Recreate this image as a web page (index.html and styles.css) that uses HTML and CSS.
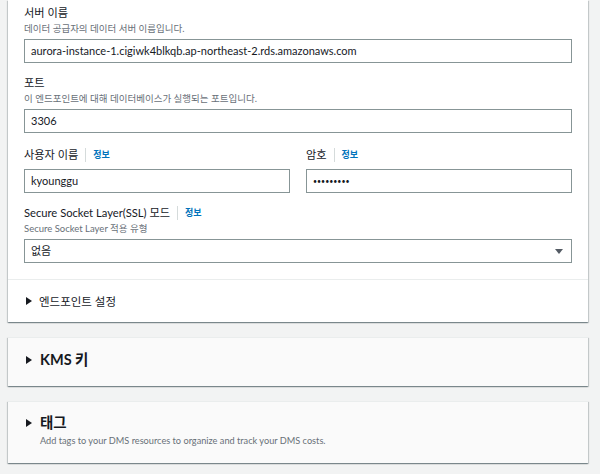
FILE: index.html
```html
<!DOCTYPE html>
<html lang="ko">
<head>
<meta charset="utf-8">
<link rel="stylesheet" href="styles.css">
</head>
<body>
<div class="page">
  <section class="card main">
    <div class="fields">
      <div class="field">
        <div class="label">서버 이름</div>
        <div class="desc">데이터 공급자의 데이터 서버 이름입니다.</div>
        <div class="input">aurora-instance-1.cigiwk4blkqb.ap-northeast-2.rds.amazonaws.com</div>
      </div>
      <div class="field">
        <div class="label">포트</div>
        <div class="desc">이 엔드포인트에 대해 데이터베이스가 실행되는 포트입니다.</div>
        <div class="input">3306</div>
      </div>
      <div class="row">
        <div class="field">
          <div class="label">사용자 이름<span class="sep"></span><a class="info">정보</a></div>
          <div class="input">kyounggu</div>
        </div>
        <div class="field">
          <div class="label">암호<span class="sep"></span><a class="info">정보</a></div>
          <div class="input pw">•••••••••</div>
        </div>
      </div>
      <div class="field ssl">
        <div class="label">Secure Socket Layer(SSL) 모드<span class="sep"></span><a class="info">정보</a></div>
        <div class="desc">Secure Socket Layer 적용 유형</div>
        <div class="input select">없음<span class="caret"></span></div>
      </div>
    </div>
    <div class="expander"><span class="tri"></span>엔드포인트 설정</div>
  </section>
  <section class="card sub">
    <h2 class="head"><span class="tri"></span>KMS 키</h2>
  </section>
  <section class="card sub tags">
    <h2 class="head"><span class="tri"></span>태그</h2>
    <div class="desc hd">Add tags to your DMS resources to organize and track your DMS costs.</div>
  </section>
</div>
</body>
</html>
```

FILE: styles.css
```css
* { box-sizing: border-box; }
html, body { margin: 0; padding: 0; }
body {
  background: #f2f3f3;
  font-family: Lato, "Noto Sans CJK KR", sans-serif;
  color: #16191f;
  width: 600px;
  height: 474px;
  overflow: hidden;
}
.page {
  padding: 0 12px 0 8px;
  display: flex;
  flex-direction: column;
  gap: 15px;
}
.card {
  background: #fff;
  border-top: 1px solid #eaeded;
  box-shadow: 0 1px 1px 0 rgba(0,28,36,.3), 1px 1px 1px 0 rgba(0,28,36,.15), -1px 1px 1px 0 rgba(0,28,36,.15);
}
.card.main { border-top: 0; }
.fields {
  padding: 4px 16px 16px 16px;
  display: flex;
  flex-direction: column;
  gap: 11px;
}
.field { display: flex; flex-direction: column; }
.row {
  display: grid;
  grid-template-columns: 1fr 1fr;
  gap: 16px;
  margin-top: 2px;
}
.label {
  font-size: 11.2px;
  line-height: 18px;
  display: flex;
  align-items: center;
  font-family: Lato, "Noto Sans CJK KR", sans-serif;
}
.sep {
  display: inline-block;
  width: 1px;
  height: 14px;
  background: #d5dbdb;
  margin: 0 7px 0 7px;
}
.info {
  color: #0073bb;
  font-size: 9px;
  font-weight: 700;
}
.desc {
  font-size: 9.5px;
  line-height: 14px;
  color: #687078;
  font-family: Lato, "Noto Sans CJK KR", sans-serif;
}
.input {
  margin-top: 3px;
  height: 24px;
  border: 1px solid #879596;
  padding: 0 6px;
  font-size: 11px;
  line-height: 22px;
  color: #16191f;
  background: #fff;
  font-family: Lato, "Noto Sans CJK KR", sans-serif;
}
.row .input { margin-top: 5px; }
.pw { font-size: 7px; }
.select { position: relative; }
.caret {
  position: absolute;
  right: 8px;
  top: 9px;
  width: 0; height: 0;
  border-left: 4px solid transparent;
  border-right: 4px solid transparent;
  border-top: 5px solid #545b64;
}
.expander {
  border-top: 1px solid #eaeded;
  height: 43px;
  padding: 0 16px 0 18px;
  display: flex;
  align-items: center;
  font-size: 11.5px;
  font-family: Lato, "Noto Sans CJK KR", sans-serif;
}
.tri {
  display: inline-block;
  width: 0; height: 0;
  border-top: 4px solid transparent;
  border-bottom: 4px solid transparent;
  border-left: 6px solid #16191f;
  margin-right: 7px;
}
.card.sub { background: #fafafa; }
.head {
  margin: 0;
  padding: 11px 16px 15px 18px;
  line-height: 22px;
  display: flex;
  align-items: center;
  font-size: 14.5px;
  font-weight: 700;
  font-family: Lato, "Noto Sans CJK KR", sans-serif;
}
.head .tri { margin-right: 8px; }
.tags .head { padding: 10px 16px 0 18px; }
.desc.hd { padding: 0 16px 15px 32px; font-size: 9.2px; }
```
